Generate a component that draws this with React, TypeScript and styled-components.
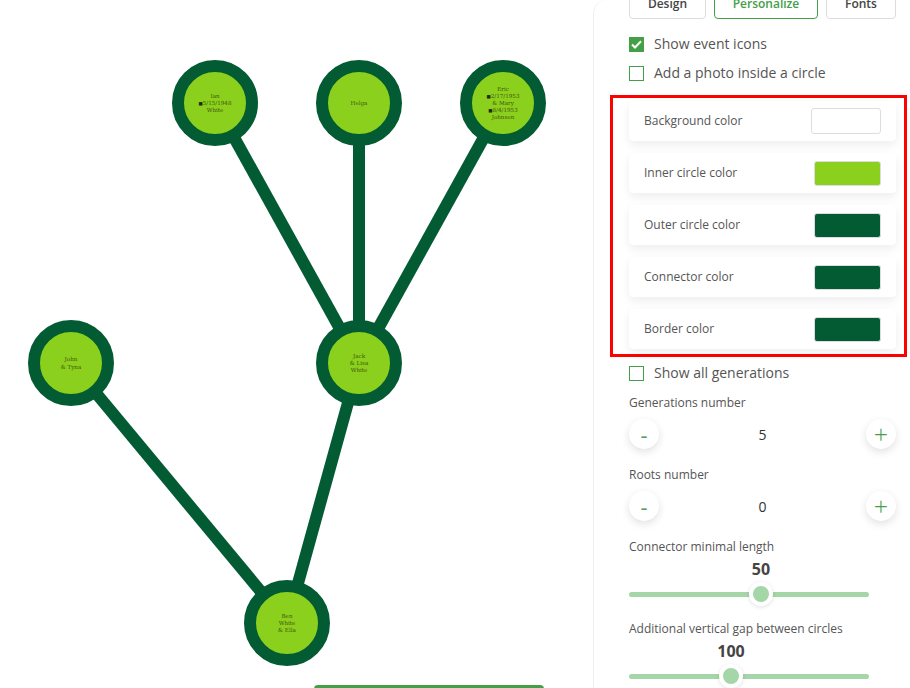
import React from "react";
import styled, { createGlobalStyle } from "styled-components";

const GlobalStyle = createGlobalStyle`
  html, body {
    margin: 0;
    padding: 0;
    height: 688px;
    overflow: hidden;
    background: #fff;
  }
`;

const OUTER = "#035b34";
const INNER = "#8bd01c";

const Page = styled.div`
  display: flex;
  width: 910px;
  height: 688px;
  overflow: hidden;
  position: relative;
  font-family: "Open Sans", sans-serif;
  color: #555;
`;

const Canvas = styled.div`
  flex: 0 0 593px;
  height: 688px;
`;

const TreeSvg = styled.svg`
  display: block;
`;

const NodeText = styled.text`
  font-family: "DejaVu Serif", serif;
  font-size: 5.6px;
  fill: #445510;
  text-anchor: middle;
`;

const EventIcon = styled.tspan`
  fill: #1f2a10;
  font-size: 4.5px;
`;

const SaveButton = styled.div`
  position: absolute;
  left: 314px;
  top: 685px;
  width: 230px;
  height: 30px;
  border-radius: 4px;
  background: #43a047;
`;

const Panel = styled.div`
  flex: 0 0 317px;
  box-sizing: border-box;
  min-width: 0;
  border-left: 1px solid #eeeeee;
  border-top-left-radius: 14px;
  padding-left: 35px;
  padding-right: 14px;
  display: flex;
  flex-direction: column;
  align-items: stretch;
`;

const Tabs = styled.div`
  display: flex;
  gap: 8px;
  margin-top: -12px;
`;

const Tab = styled.div<{ $active?: boolean; $w: number }>`
  box-sizing: border-box;
  width: ${(p) => p.$w}px;
  height: 31px;
  display: flex;
  align-items: center;
  justify-content: center;
  border: 1px solid ${(p) => (p.$active ? "#43a047" : "#dddddd")};
  border-radius: 4px;
  font-size: 12px;
  font-weight: 600;
  color: ${(p) => (p.$active ? "#43a047" : "#444")};
`;

const CheckRow = styled.div<{ $mt: number }>`
  display: flex;
  align-items: center;
  gap: 10px;
  height: 20px;
  margin-top: ${(p) => p.$mt}px;
  font-size: 14px;
  color: #555;
`;

const RowLabel = styled.span`
  margin-bottom: 2px;
`;

const CheckBox = styled.span<{ $on?: boolean }>`
  box-sizing: border-box;
  width: 15px;
  height: 15px;
  border: 1px solid #43a047;
  background: ${(p) => (p.$on ? "#43a047" : "#fff")};
  display: flex;
  align-items: center;
  justify-content: center;
`;

const ColorBox = styled.div`
  box-sizing: border-box;
  width: 297px;
  height: 262px;
  margin: 12px 0 0 -19px;
  border: 3px solid #ff0000;
  padding: 3px 8px 0 16px;
  display: flex;
  flex-direction: column;
  gap: 12px;
`;

const ColorRow = styled.div`
  height: 40px;
  padding: 0 15px;
  display: flex;
  align-items: center;
  justify-content: space-between;
  background: #fff;
  border-radius: 4px;
  box-shadow: 0 4px 10px rgba(0, 0, 0, 0.07);
  font-size: 12px;
  color: #555;
`;

const Swatch = styled.div<{ $color: string; $blank?: boolean }>`
  box-sizing: border-box;
  width: ${(p) => (p.$blank ? 70 : 67)}px;
  height: ${(p) => (p.$blank ? 26 : 25)}px;
  background: ${(p) => p.$color};
  border: 1px solid #dddddd;
  border-radius: 3px;
`;

const FieldLabel = styled.div<{ $mt: number }>`
  margin-top: ${(p) => p.$mt}px;
  font-size: 12px;
  line-height: 16px;
  color: #555;
`;

const Stepper = styled.div`
  display: flex;
  align-items: center;
  justify-content: space-between;
  margin-top: 8px;
`;

const StepButton = styled.div<{ $minus?: boolean }>`
  width: 30px;
  height: 30px;
  border-radius: 50%;
  background: #fff;
  box-shadow: 0 3px 8px rgba(0, 0, 0, 0.12);
  display: flex;
  align-items: center;
  justify-content: center;
  color: ${(p) => (p.$minus ? "#5a9a60" : "#43a047")};
  font-size: ${(p) => (p.$minus ? 22 : 25)}px;
  font-weight: ${(p) => (p.$minus ? 400 : 300)};
  line-height: 30px;
`;

const StepValue = styled.div`
  font-size: 14px;
  font-weight: 500;
  color: #333;
`;

const SliderWrap = styled.div`
  position: relative;
  width: 240px;
  height: 48px;
`;

const SliderTrack = styled.div`
  position: absolute;
  left: 0;
  right: 0;
  top: 37px;
  height: 5px;
  border-radius: 3px;
  background: #a5d6a7;
`;

const SliderThumb = styled.div`
  position: absolute;
  top: 39px;
  box-sizing: border-box;
  width: 24px;
  height: 24px;
  margin: -12px 0 0 -12px;
  border-radius: 50%;
  background: #a5d6a7;
  border: 4px solid #fff;
  box-shadow: 0 1px 4px rgba(0, 0, 0, 0.12);
`;

const SliderValue = styled.div`
  position: absolute;
  top: 4px;
  transform: translateX(-50%);
  font-size: 16px;
  font-weight: 700;
  line-height: 20px;
  color: #444;
`;

type NodeLine = { text: string; icon?: boolean };
type NodeData = { x: number; y: number; lines: NodeLine[] };

const nodes: NodeData[] = [
  { x: 215, y: 103, lines: [{ text: "Ian" }, { text: "5/15/1948", icon: true }, { text: "White" }] },
  { x: 359, y: 103, lines: [{ text: "Helga" }] },
  {
    x: 503,
    y: 103,
    lines: [
      { text: "Eric" },
      { text: "2/17/1953", icon: true },
      { text: "& Mary" },
      { text: "8/4/1953", icon: true },
      { text: "Johnson" },
    ],
  },
  { x: 71, y: 363, lines: [{ text: "John" }, { text: "& Tyna" }] },
  { x: 359, y: 363, lines: [{ text: "Jack" }, { text: "& Lisa" }, { text: "White" }] },
  { x: 287, y: 623, lines: [{ text: "Ben" }, { text: "White" }, { text: "& Ella" }] },
];

const links = [
  [215, 103, 359, 363],
  [359, 103, 359, 363],
  [503, 103, 359, 363],
  [71, 363, 287, 623],
  [359, 363, 287, 623],
];

const colorRows = [
  { label: "Background color", color: "#ffffff", blank: true },
  { label: "Inner circle color", color: INNER },
  { label: "Outer circle color", color: OUTER },
  { label: "Connector color", color: OUTER },
  { label: "Border color", color: OUTER },
];

const Tree = () => (
  <TreeSvg width={593} height={688} viewBox="0 0 593 688">
    {links.map(([x1, y1, x2, y2], i) => (
      <line key={i} x1={x1} y1={y1} x2={x2} y2={y2} stroke={OUTER} strokeWidth={12} />
    ))}
    {nodes.map((n) => (
      <g key={`${n.x}-${n.y}`}>
        <circle cx={n.x} cy={n.y} r={37} fill={INNER} stroke={OUTER} strokeWidth={12} />
        {n.lines.map((line, i) => (
          <NodeText key={i} x={n.x} y={n.y + 2 + (i - (n.lines.length - 1) / 2) * 7.2}>
            {line.icon && <EventIcon>■</EventIcon>}
            {line.text}
          </NodeText>
        ))}
      </g>
    ))}
  </TreeSvg>
);

const Slider = ({ value, percent }: { value: number; percent: number }) => (
  <SliderWrap>
    <SliderValue style={{ left: `${percent}%` }}>{value}</SliderValue>
    <SliderTrack />
    <SliderThumb style={{ left: `${percent}%` }} />
  </SliderWrap>
);

const Step = ({ value }: { value: number }) => (
  <Stepper>
    <StepButton $minus>-</StepButton>
    <StepValue>{value}</StepValue>
    <StepButton>+</StepButton>
  </Stepper>
);

export default function App() {
  return (
    <Page>
      <GlobalStyle />
      <Canvas>
        <Tree />
      </Canvas>
      <SaveButton />
      <Panel>
        <Tabs>
          <Tab $w={77}>Design</Tab>
          <Tab $w={104} $active>
            Personalize
          </Tab>
          <Tab $w={70}>Fonts</Tab>
        </Tabs>
        <CheckRow $mt={15}>
          <CheckBox $on>
            <svg width="11" height="9" viewBox="0 0 11 9">
              <path d="M1 4.5 L4 7.5 L10 1.2" fill="none" stroke="#fff" strokeWidth="2" />
            </svg>
          </CheckBox>
          <RowLabel>Show event icons</RowLabel>
        </CheckRow>
        <CheckRow $mt={9}>
          <CheckBox />
          <RowLabel>Add a photo inside a circle</RowLabel>
        </CheckRow>
        <ColorBox>
          {colorRows.map((r) => (
            <ColorRow key={r.label}>
              <RowLabel>{r.label}</RowLabel>
              <Swatch $color={r.color} $blank={r.blank} />
            </ColorRow>
          ))}
        </ColorBox>
        <CheckRow $mt={6}>
          <CheckBox />
          <RowLabel>Show all generations</RowLabel>
        </CheckRow>
        <FieldLabel $mt={12}>Generations number</FieldLabel>
        <Step value={5} />
        <FieldLabel $mt={18}>Roots number</FieldLabel>
        <Step value={0} />
        <FieldLabel $mt={18}>Connector minimal length</FieldLabel>
        <Slider value={50} percent={55} />
        <FieldLabel $mt={18}>Additional vertical gap between circles</FieldLabel>
        <Slider value={100} percent={42.5} />
      </Panel>
    </Page>
  );
}
